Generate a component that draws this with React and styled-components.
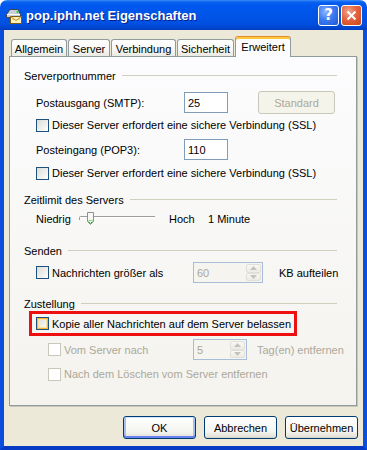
import React from 'react'
import styled, { createGlobalStyle } from 'styled-components'

const GlobalStyle = createGlobalStyle`
  html, body {
    margin: 0;
    padding: 0;
    background: #ffffff;
  }
  body {
    font-family: "Liberation Sans", Arial, sans-serif;
    font-size: 11px;
    color: #000000;
  }
`

const Window = styled.div`
  width: 367px;
  height: 450px;
  display: flex;
  flex-direction: column;
`

const TitleBar = styled.div`
  height: 30px;
  flex: none;
  display: flex;
  align-items: center;
  padding: 0 5px 0 5px;
  box-sizing: border-box;
  border-radius: 7px 7px 0 0;
  background: linear-gradient(
    to bottom,
    #3d8ff8 0px,
    #0a62f0 2px,
    #0058ee 5px,
    #0055e8 50%,
    #0050e0 80%,
    #0044cc 94%,
    #003dbc 100%
  );
`

const TitleIcon = styled.svg`
  flex: none;
  margin-top: 1px;
`

const TitleText = styled.div`
  flex: 1;
  margin-left: 4px;
  color: #ffffff;
  font-family: "Liberation Sans", Arial, sans-serif;
  font-weight: bold;
  font-size: 13px;
  text-shadow: 1px 1px 0 #0a1f8c;
`

const CaptionButton = styled.div`
  width: 21px;
  height: 21px;
  box-sizing: border-box;
  border: 1px solid #ffffff;
  border-radius: 3px;
  margin-left: 2px;
  display: flex;
  align-items: center;
  justify-content: center;
  color: #ffffff;
  font-family: "DejaVu Sans", sans-serif;
  font-weight: bold;
  font-size: 15px;
  background: ${p => p.$close
    ? 'radial-gradient(circle at 35% 30%, #f2a68c 0%, #e3643f 45%, #c94516 100%)'
    : 'radial-gradient(circle at 35% 30%, #8fb6ff 0%, #3c7bf2 45%, #1d58d8 100%)'};
`

const Frame = styled.div`
  flex: 1;
  display: flex;
  flex-direction: column;
  background: #ece9d8;
  border: 4px solid #0a4fde;
  border-top: none;
  border-left-color: #0b4ddc;
  border-bottom-color: #0639c4;
  padding: 6px 6px 7px 5px;
`

const TabStrip = styled.div`
  display: flex;
  align-items: flex-end;
  height: 21px;
  padding-left: 2px;
  gap: 1px;
`

const Tab = styled.div`
  width: ${p => p.$w}px;
  height: ${p => (p.$active ? 21 : 18)}px;
  box-sizing: border-box;
  display: flex;
  align-items: center;
  justify-content: center;
  border: 1px solid #919b9c;
  border-bottom: none;
  border-radius: 3px 3px 0 0;
  padding-bottom: ${p => (p.$active ? 3 : 0)}px;
  background: ${p => (p.$active
    ? '#fcfcfe'
    : 'linear-gradient(to bottom, #ffffff 0%, #f6f6f2 60%, #e8e7e0 100%)')};
  ${p => p.$active && `
    position: relative;
    z-index: 1;
    border-top: 1px solid #e68b2c;
    box-shadow: inset 0 2px 0 #ffc73c;
    padding-top: 2px;
  `}
`

const Panel = styled.div`
  flex: 1;
  margin-top: -1px;
  border: 1px solid #919b9c;
  box-shadow: 1px 1px 0 #c8c6b8;
  background: linear-gradient(to bottom, #fcfcfe 0%, #f4f3ee 100%);
  padding: 0 19px 0 14px;
  display: flex;
  flex-direction: column;
`

const GroupHeader = styled.div`
  display: flex;
  align-items: center;
  height: 13px;
  margin-top: ${p => p.$mt}px;
`

const GroupLine = styled.div`
  flex: 1;
  height: 1px;
  margin-left: 6px;
  background: #d0d0bf;
`

const Row = styled.div`
  display: flex;
  align-items: center;
  height: ${p => p.$h || 21}px;
  margin-top: ${p => p.$mt || 0}px;
  padding-left: ${p => p.$indent || 0}px;
`

const Label = styled.span`
  flex: none;
  white-space: nowrap;
  width: ${p => (p.$w ? `${p.$w}px` : 'auto')};
  margin-left: ${p => p.$ml || 0}px;
  color: ${p => (p.$disabled ? '#aca899' : '#000000')};
`

const TextBox = styled.div`
  flex: none;
  position: relative;
  width: ${p => p.$w}px;
  height: ${p => p.$h || 21}px;
  box-sizing: border-box;
  border: 1px solid ${p => (p.$disabled ? '#a9bdd8' : '#7f9db9')};
  background: ${p => (p.$disabled ? '#f5f4ef' : '#ffffff')};
  color: ${p => (p.$disabled ? '#aca899' : '#000000')};
  padding-left: 3px;
  display: flex;
  align-items: center;
`

const SpinColumn = styled.div`
  position: absolute;
  top: 1px;
  right: 1px;
  bottom: 1px;
  width: 15px;
  display: flex;
  flex-direction: column;
`

const SpinButton = styled.div`
  flex: 1;
  box-sizing: border-box;
  border: 1px solid #e2e0d6;
  border-radius: 2px;
  background: linear-gradient(to bottom, #f8f8f4, #ecebe4);
  display: flex;
  align-items: center;
  justify-content: center;
`

const CheckItem = styled.div`
  flex: none;
  display: flex;
  align-items: center;
  width: ${p => (p.$w ? `${p.$w}px` : 'auto')};
`

const CheckBox = styled.div`
  flex: none;
  width: 13px;
  height: 13px;
  box-sizing: border-box;
  margin-right: 3px;
  border: 1px solid ${p => (p.$disabled ? '#cac8bb' : '#1c5180')};
  background: ${p => (p.$disabled
    ? '#ffffff'
    : 'linear-gradient(135deg, #dcdcd7 0%, #f0f0ec 60%, #ffffff 100%)')};
  ${p => p.$hot && `
    box-shadow: inset 0 0 0 1px #f8b636, inset 0 0 0 2px #fedf9c;
  `}
`

const Highlight = styled.div`
  display: flex;
  align-items: center;
  align-self: flex-start;
  height: 25px;
  box-sizing: border-box;
  margin: 1px 0 0 5px;
  padding: 0 3px 0 4px;
  border: 3px solid #ee1010;
`

const XPButton = styled.div`
  flex: none;
  width: ${p => p.$w || 73}px;
  height: 23px;
  box-sizing: border-box;
  margin-left: ${p => p.$ml || 0}px;
  border: 1px solid ${p => (p.$disabled ? '#c9c7ba' : '#003c74')};
  border-radius: 3px;
  display: flex;
  align-items: center;
  justify-content: center;
  color: ${p => (p.$disabled ? '#aca899' : '#000000')};
  background: ${p => (p.$disabled
    ? '#f5f4ea'
    : 'linear-gradient(to bottom, #ffffff 0%, #f4f4f0 70%, #e6e3da 92%, #d6d0c5 100%)')};
  ${p => p.$default && `
    box-shadow: inset 0 1px 0 #cee7ff, inset 0 -2px 0 #6982ee, inset 2px 0 0 #a5c0ee, inset -2px 0 0 #a5c0ee;
  `}
`

const ButtonBar = styled.div`
  display: flex;
  justify-content: flex-end;
  margin-top: 10px;
  margin-right: -1px;
`

function SpinArrows() {
  return (
    <SpinColumn>
      <SpinButton>
        <svg width="7" height="4" viewBox="0 0 7 4">
          <path d="M0 4 L3.5 0 L7 4 Z" fill="#c4c3bb" />
        </svg>
      </SpinButton>
      <SpinButton>
        <svg width="7" height="4" viewBox="0 0 7 4">
          <path d="M0 0 L3.5 4 L7 0 Z" fill="#c4c3bb" />
        </svg>
      </SpinButton>
    </SpinColumn>
  )
}

function Slider() {
  return (
    <svg width="78" height="14" viewBox="0 0 78 14" style={{ flex: 'none' }}>
      <path d="M0.5 8 V5.5 Q0.5 4.5 1.5 4.5 H76" fill="none" stroke="#9d9c99" />
      <path d="M1.5 5.5 H76" fill="none" stroke="#ffffff" />
      <path d="M8.5 0.5 H14.5 V9.5 L11.5 12.5 L8.5 9.5 Z" fill="#f7f7f4" stroke="#8e8f8f" />
      <path d="M9.5 9.5 L11.5 11.5 L13.5 9.5" fill="none" stroke="#21b121" />
      <path d="M9.5 8.5 L13.5 8.5" fill="none" stroke="#7fd97f" />
    </svg>
  )
}

export default function App() {
  return (
    <>
      <GlobalStyle />
      <Window>
        <TitleBar>
          <TitleIcon width="17" height="17" viewBox="0 0 17 17">
            <path d="M1.5 7.5 L5 2.5 H13 L15.5 7.5 V10.5 H1.5 Z" fill="#c9ced8" stroke="#3e4452" />
            <path d="M2 7.5 H15" stroke="#ffffff" />
            <circle cx="12.5" cy="5" r="1.2" fill="#38d838" />
            <rect x="5.5" y="9.5" width="11" height="7" fill="#fff4bd" stroke="#7a5a14" />
            <path d="M5.5 9.5 L11 13.5 L16.5 9.5" fill="none" stroke="#d08a18" />
            <path d="M7 12 H9 M13 12 H15" stroke="#e5a43a" />
          </TitleIcon>
          <TitleText>pop.iphh.net Eigenschaften</TitleText>
          <CaptionButton>?</CaptionButton>
          <CaptionButton $close>
            <svg width="11" height="11" viewBox="0 0 11 11">
              <path d="M1.5 1.5 L9.5 9.5 M9.5 1.5 L1.5 9.5" stroke="#ffffff" strokeWidth="2" />
            </svg>
          </CaptionButton>
        </TitleBar>
        <Frame>
          <TabStrip>
            <Tab $w={56}>Allgemein</Tab>
            <Tab $w={42}>Server</Tab>
            <Tab $w={65}>Verbindung</Tab>
            <Tab $w={57}>Sicherheit</Tab>
            <Tab $w={56} $active>Erweitert</Tab>
          </TabStrip>
          <Panel>
            <GroupHeader $mt={12}>
              <Label>Serverportnummer</Label>
              <GroupLine />
            </GroupHeader>
            <Row $mt={10} $indent={12}>
              <Label $w={148}>Postausgang (SMTP):</Label>
              <TextBox $w={44}>25</TextBox>
              <XPButton $w={77} $ml={30} $disabled>Standard</XPButton>
            </Row>
            <Row $mt={5} $h={14} $indent={12}>
              <CheckItem>
                <CheckBox />
                <Label>Dieser Server erfordert eine sichere Verbindung (SSL)</Label>
              </CheckItem>
            </Row>
            <Row $mt={7} $indent={12}>
              <Label $w={148}>Posteingang (POP3):</Label>
              <TextBox $w={44}>110</TextBox>
            </Row>
            <Row $mt={6} $h={14} $indent={12}>
              <CheckItem>
                <CheckBox />
                <Label>Dieser Server erfordert eine sichere Verbindung (SSL)</Label>
              </CheckItem>
            </Row>

            <GroupHeader $mt={13}>
              <Label>Zeitlimit des Servers</Label>
              <GroupLine />
            </GroupHeader>
            <Row $mt={5} $h={16} $indent={12}>
              <Label $w={43}>Niedrig</Label>
              <Slider />
              <Label $w={39} $ml={12}>Hoch</Label>
              <Label>1 Minute</Label>
            </Row>

            <GroupHeader $mt={17}>
              <Label>Senden</Label>
              <GroupLine />
            </GroupHeader>
            <Row $mt={5} $indent={12}>
              <CheckItem $w={157}>
                <CheckBox />
                <Label>Nachrichten größer als</Label>
              </CheckItem>
              <TextBox $w={70} $disabled>
                60
                <SpinArrows />
              </TextBox>
              <Label $ml={16}>KB aufteilen</Label>
            </Row>

            <GroupHeader $mt={14}>
              <Label>Zustellung</Label>
              <GroupLine />
            </GroupHeader>
            <Highlight>
              <CheckBox $hot />
              <Label>Kopie aller Nachrichten auf dem Server belassen</Label>
            </Highlight>
            <Row $mt={3} $indent={24}>
              <CheckItem $w={145}>
                <CheckBox $disabled />
                <Label $disabled>Vom Server nach</Label>
              </CheckItem>
              <TextBox $w={54} $disabled>
                5
                <SpinArrows />
              </TextBox>
              <Label $ml={10} $disabled>Tag(en) entfernen</Label>
            </Row>
            <Row $mt={7} $h={14} $indent={24}>
              <CheckItem>
                <CheckBox $disabled />
                <Label $disabled>Nach dem Löschen vom Server entfernen</Label>
              </CheckItem>
            </Row>
          </Panel>
          <ButtonBar>
            <XPButton $default>OK</XPButton>
            <XPButton $ml={8}>Abbrechen</XPButton>
            <XPButton $ml={8}>Übernehmen</XPButton>
          </ButtonBar>
        </Frame>
      </Window>
    </>
  )
}
